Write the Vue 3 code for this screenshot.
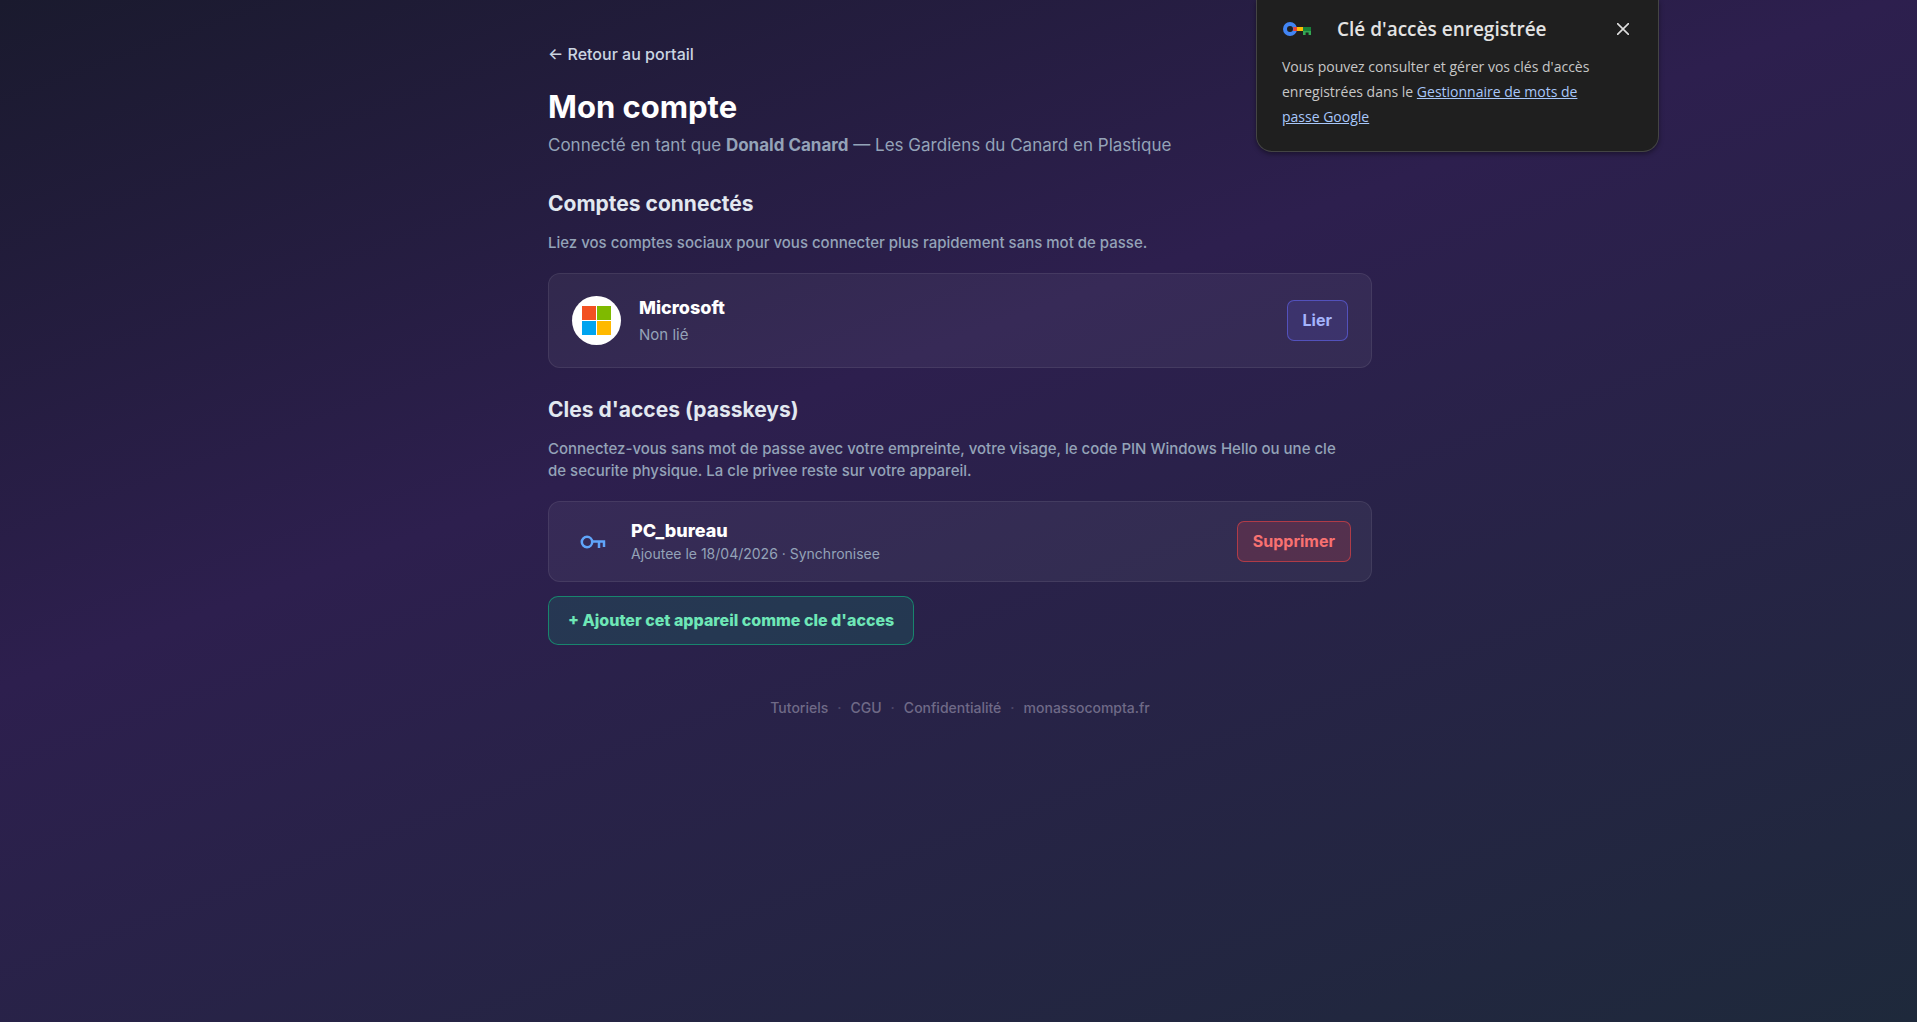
<script setup>
import { ref } from 'vue'

const providers = ref([
  { id: 'microsoft', name: 'Microsoft', linked: false },
])

const passkeys = ref([
  { id: 1, name: 'PC_bureau', added: '18/04/2026', synced: true },
])

const footer_links = ['Tutoriels', 'CGU', 'Confidentialité', 'monassocompta.fr']

const show_toast = ref(true)

function toggle_link(provider) {
  provider.linked = !provider.linked
}

function remove_passkey(id) {
  passkeys.value = passkeys.value.filter(k => k.id !== id)
}
</script>

<template>
  <div class="page">
    <main class="account">
      <a class="back" href="#">← Retour au portail</a>
      <h1>Mon compte</h1>
      <p class="subtitle">Connecté en tant que <strong>Donald Canard</strong> — Les Gardiens du Canard en Plastique</p>

      <section class="providers">
        <h2>Comptes connectés</h2>
        <p class="intro">Liez vos comptes sociaux pour vous connecter plus rapidement sans mot de passe.</p>
        <div v-for="p in providers" :key="p.id" class="card provider">
          <div class="logo">
            <svg viewBox="0 0 29 29" width="29" height="29" aria-hidden="true">
              <rect width="14" height="14" fill="#f25022" />
              <rect x="15" width="14" height="14" fill="#7fba00" />
              <rect y="15" width="14" height="14" fill="#00a4ef" />
              <rect x="15" y="15" width="14" height="14" fill="#ffb900" />
            </svg>
          </div>
          <div class="info">
            <div class="name">{{ p.name }}</div>
            <div class="detail">{{ p.linked ? 'Lié' : 'Non lié' }}</div>
          </div>
          <button type="button" class="btn btn-link" @click="toggle_link(p)">{{ p.linked ? 'Délier' : 'Lier' }}</button>
        </div>
      </section>

      <section class="passkeys">
        <h2>Cles d'acces (passkeys)</h2>
        <p class="intro">Connectez-vous sans mot de passe avec votre empreinte, votre visage, le code PIN Windows Hello ou une cle de securite physique. La cle privee reste sur votre appareil.</p>
        <div v-for="k in passkeys" :key="k.id" class="card passkey">
          <div class="key">
            <svg viewBox="0 0 26 14" width="26" height="14" fill="none" stroke="#60a5fa" stroke-width="2.5" aria-hidden="true">
              <circle cx="7" cy="7" r="5.2" />
              <path d="M12.2 6.6H25.2M24 6.6V12M19 6.6V13" />
            </svg>
          </div>
          <div class="info">
            <div class="name">{{ k.name }}</div>
            <div class="detail">Ajoutee le {{ k.added }}{{ k.synced ? ' · Synchronisee' : '' }}</div>
          </div>
          <button type="button" class="btn btn-remove" @click="remove_passkey(k.id)">Supprimer</button>
        </div>
        <button type="button" class="btn-add">+ Ajouter cet appareil comme cle d'acces</button>
      </section>

      <footer>
        <template v-for="(label, i) in footer_links" :key="label">
          <span v-if="i > 0" class="dot">·</span>
          <a href="#">{{ label }}</a>
        </template>
      </footer>
    </main>

    <aside v-if="show_toast" class="toast">
      <header>
        <svg viewBox="0 0 28 14" width="28" height="14" aria-hidden="true">
          <circle cx="7" cy="7" r="5" fill="none" stroke="#4285f4" stroke-width="4" />
          <path d="M10 5H14V9H10A3.6 3.6 0 0 0 10 5Z" fill="#ea4335" />
          <path d="M14 5H20V9H14Z" fill="#fbbc04" />
          <path d="M20 5H28V9H20Z" fill="#188038" />
          <path d="M20 9H28V13H25.6V10.500H22.6V13H20Z" fill="#34a853" />
        </svg>
        <h3>Clé d'accès enregistrée</h3>
        <button type="button" class="close" aria-label="Fermer" @click="show_toast = false">
          <svg viewBox="0 0 12 12" width="12" height="12" stroke="#dedede" stroke-width="1.6" aria-hidden="true">
            <path d="M0 0L12 12M12 0L0 12" />
          </svg>
        </button>
      </header>
      <p>Vous pouvez consulter et gérer vos clés d'accès enregistrées dans le <a href="#">Gestionnaire de mots de passe Google</a></p>
    </aside>
  </div>
</template>

<style>
body {
  margin: 0;
  background: #1a1a2e;
}
</style>

<style scoped>
.page {
  position: relative;
  box-sizing: border-box;
  min-height: 100vh;
  padding-left: 3px;
  background: linear-gradient(160deg, #1a1a2e 0%, #2d1f4e 40%, #1e293b 100%);
  font-family: Inter, sans-serif;
  color: #e2e8f0;
}

h1,
h2,
h3,
p {
  margin: 0;
}

a {
  color: inherit;
  text-decoration: none;
}

button {
  font-family: inherit;
  cursor: pointer;
}

.account {
  max-width: 824px;
  margin: 0 auto;
  padding: 42px 24px;
}

.back {
  display: inline-block;
  font-size: 16px;
  font-weight: 500;
  line-height: 24px;
  color: #cbd5e1;
}

h1 {
  margin-top: 19px;
  font-size: 31px;
  font-weight: 700;
  line-height: 44px;
  color: #fff;
}

.subtitle {
  margin-top: 4px;
  font-size: 17px;
  line-height: 24px;
  color: #94a3b8;
}

.providers {
  margin-top: 31px;
}

.passkeys {
  margin-top: 26px;
}

h2 {
  font-size: 21px;
  font-weight: 700;
  line-height: 32px;
}

.intro {
  margin: 12px 0 19px;
  padding-right: 24px;
  font-size: 15px;
  font-weight: 500;
  line-height: 22px;
  color: #94a3b8;
}

.card {
  display: flex;
  align-items: center;
  border: 1px solid rgba(255, 255, 255, 0.08);
  border-radius: 12px;
  background: rgba(255, 255, 255, 0.05);
}

.provider {
  gap: 18px;
  padding: 21px 23px;
}

.passkey {
  gap: 15px;
  padding: 17px 20px;
}

.logo {
  display: flex;
  align-items: center;
  justify-content: center;
  width: 49px;
  height: 49px;
  border-radius: 50%;
  background: #fff;
}

.key {
  display: flex;
  justify-content: center;
  width: 47px;
}

.info {
  flex: 1;
}

.name {
  font-size: 18px;
  font-weight: 800;
  line-height: 26px;
  color: #fff;
}

.detail {
  margin-top: 3px;
  font-size: 15px;
  line-height: 22px;
  color: #94a3b8;
}

.passkey .name {
  line-height: 24px;
}

.passkey .detail {
  margin-top: 1px;
  font-size: 14px;
  line-height: 20px;
}

.btn {
  padding: 9px 15px;
  border: 1px solid;
  border-radius: 7px;
  font-size: 16px;
  font-weight: 700;
  line-height: 21px;
}

.btn-link {
  border-color: rgba(99, 102, 241, 0.6);
  background: rgba(99, 102, 241, 0.15);
  color: #a5b4fc;
}

.btn-remove {
  border-color: rgba(239, 68, 68, 0.6);
  background: rgba(239, 68, 68, 0.18);
  color: #f87171;
}

.btn-add {
  display: block;
  margin-top: 14px;
  padding: 12px 19px;
  border: 1px solid rgba(16, 185, 129, 0.6);
  border-radius: 10px;
  background: rgba(16, 185, 129, 0.15);
  font-size: 16px;
  font-weight: 800;
  line-height: 23px;
  color: #6ee7b7;
}

footer {
  display: flex;
  justify-content: center;
  gap: 9px;
  margin-top: 53px;
  font-size: 14px;
  font-weight: 500;
  line-height: 20px;
  color: #6f6a87;
}

.dot {
  color: #4d4868;
}

/* browser bubble hanging over the page */
.toast {
  position: absolute;
  top: 0;
  right: 258px;
  box-sizing: border-box;
  width: 403px;
  padding: 15px 25px 22px;
  border: 1px solid #444;
  border-top: 0;
  border-radius: 0 0 16px 16px;
  background: #1f1f1f;
  box-shadow: 0 2px 5px rgba(0, 0, 0, 0.4);
  font-family: "Open Sans", sans-serif;
}

.toast header {
  display: flex;
  align-items: center;
  padding-left: 1px;
}

.toast h3 {
  flex: 1;
  margin-left: 26px;
  font-size: 19px;
  font-weight: 600;
  line-height: 28px;
  color: #e3e3e3;
}

.close {
  display: flex;
  margin-right: 4px;
  padding: 0;
  border: 0;
  background: none;
}

.toast p {
  margin-top: 11px;
  padding-right: 24px;
  font-size: 14px;
  line-height: 25px;
  color: #c7c7c7;
}

.toast p a {
  color: #a8c7fa;
  text-decoration: underline;
}
</style>
